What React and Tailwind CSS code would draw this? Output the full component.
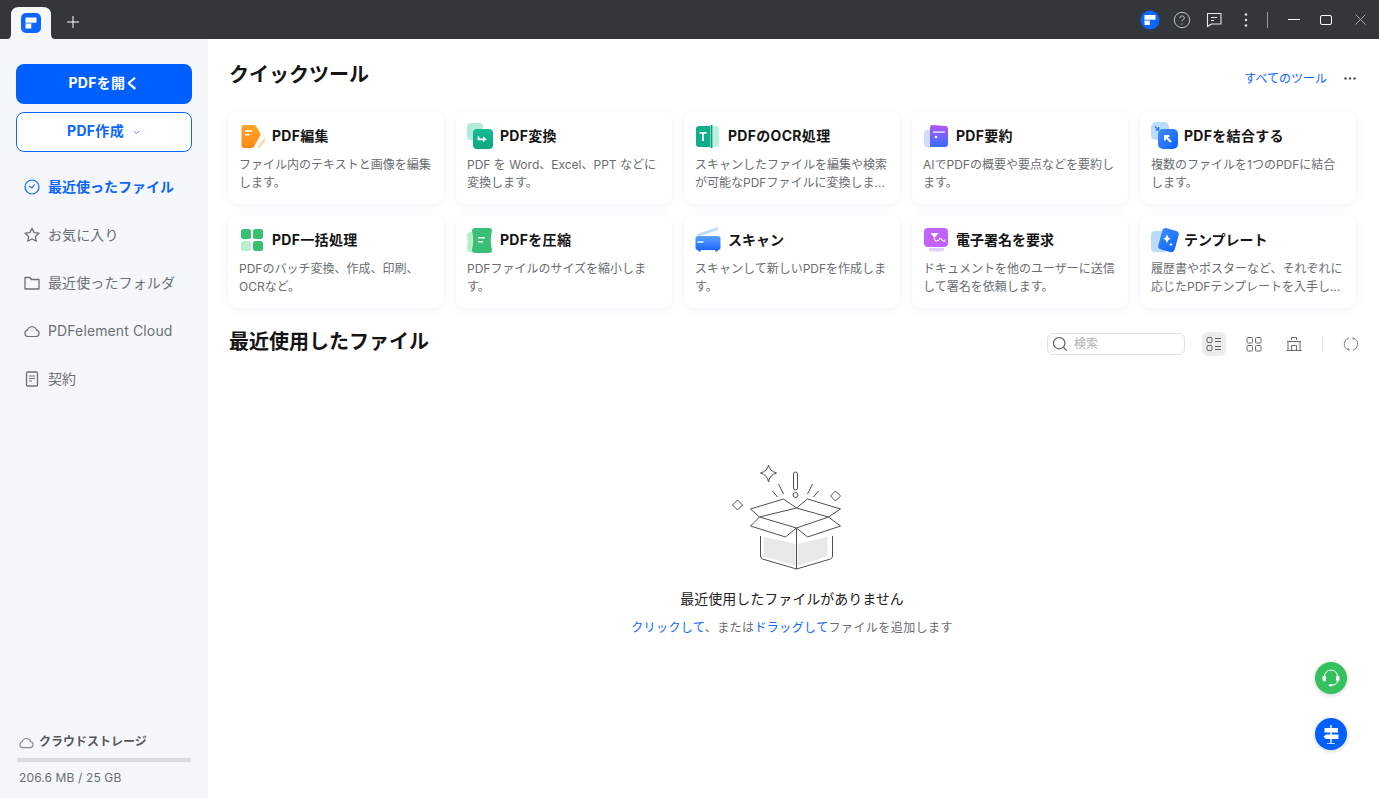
import React from "react";
import { ChevronDown } from "lucide-react";

/* Brand mark, shared by the tab and the title bar */
function Logo({ className }) {
  return (
    <svg viewBox="0 0 20 20" className={className}>
      <rect width="20" height="20" rx="5" fill="#0a66ff" />
      <path d="M4.500 4.500h11v5.200H10.300v5.800H4.500z" fill="#fff" />
      <path d="M4.500 9.700h5.800v.8H4.500z" fill="#0a66ff" />
    </svg>
  );
}

const EditIcon = () => (
  <svg viewBox="0 0 28 28" className="w-7 h-7">
    <defs>
      <linearGradient id="ed" x1="0" y1="0" x2="0" y2="1">
        <stop offset="0" stopColor="#ffa42c" />
        <stop offset="1" stopColor="#ff8a12" />
      </linearGradient>
    </defs>
    <path d="M25.500 15.500l1 .6-.4 3-5 6.400-2.400.6.300-2.700z" fill="#ffdcae" />
    <path d="M5 3h9.500q2 0 3 1.700l3.500 6q1 1.700 0 3.300l-6 10.500q-1 1.500-3 1.500H5q-2.500 0-2.500-2.500V5.500Q2.500 3 5 3z" fill="url(#ed)" />
    <path d="M6 8.300h7v1.400H6zM6 12h4.500v1.400H6z" fill="#fff" />
  </svg>
);

const ConvertIcon = () => (
  <svg viewBox="0 0 28 28" className="w-7 h-7">
    <defs>
      <linearGradient id="cv" x1="0" y1="0" x2="0" y2="1">
        <stop offset="0" stopColor="#16bb96" />
        <stop offset="1" stopColor="#0ea582" />
      </linearGradient>
    </defs>
    <rect x="0" y="1" width="16" height="17" rx="4" fill="#b1ecd8" />
    <rect x="6" y="7" width="20" height="20" rx="4" fill="url(#cv)" />
    <path d="M11.500 14.500v2.800h5" fill="none" stroke="#fff" strokeWidth="1.800" />
    <path d="M16 14.300l3.500 3-3.500 3z" fill="#fff" />
  </svg>
);

const OcrIcon = () => (
  <svg viewBox="0 0 28 28" className="w-7 h-7">
    <path d="M18 4h3q3 0 3 3v15q0 3-3 3h-3z" fill="#bdf0de" />
    <path d="M4 4h11v21H4q-3 0-3-3V7q0-3 3-3z" fill="#10ad8a" />
    <rect x="15.500" y="3" width="2" height="23" fill="#0c9c7c" />
    <path d="M4.500 10h7v1.800H8.900V19H7.100v-7.200H4.500z" fill="#fff" />
  </svg>
);

const SummaryIcon = () => (
  <svg viewBox="0 0 28 28" className="w-7 h-7">
    <defs>
      <linearGradient id="sm" x1="0" y1="0" x2="0" y2="1">
        <stop offset="0" stopColor="#b454f6" />
        <stop offset="1" stopColor="#366eff" />
      </linearGradient>
    </defs>
    <rect x="1" y="8" width="12" height="17" rx="3" fill="#d2dbfa" />
    <path d="M7 6q0-3 3-3l12 1q3 .3 3 3v15q0 3-3 3H7z" fill="url(#sm)" />
    <path d="M10 9.500h12v1.200H10z" fill="#fff" />
    <circle cx="13" cy="15" r="1.300" fill="#fff" />
  </svg>
);

const MergeIcon = () => (
  <svg viewBox="0 0 28 28" className="w-7 h-7">
    <defs>
      <linearGradient id="mg" x1="0" y1="0" x2="1" y2="1">
        <stop offset="0" stopColor="#3c8dff" />
        <stop offset="1" stopColor="#0e62fa" />
      </linearGradient>
    </defs>
    <rect x="0" y="0" width="18" height="18" rx="5" fill="#bcdcfd" />
    <path d="M4 4.500l3.600 3.600M7.600 5v3.100H4.500" stroke="#2f7bf5" strokeWidth="1.400" fill="none" />
    <rect x="7" y="7" width="20" height="20" rx="5" fill="url(#mg)" />
    <path d="M20 20l-5.500-5.500M14 18.500V14h4.500" stroke="#fff" strokeWidth="2" fill="none" />
  </svg>
);

const BatchIcon = () => (
  <svg viewBox="0 0 28 28" className="w-7 h-7">
    <rect x="2" y="3" width="10" height="10" rx="2.500" fill="#37bf72" />
    <rect x="14" y="3" width="10" height="10" rx="2.500" fill="#37bf72" />
    <rect x="2" y="15" width="10" height="10" rx="2.500" fill="#b6f0cd" />
    <rect x="14" y="15" width="10" height="10" rx="2.500" fill="#37bf72" />
  </svg>
);

const CompressIcon = () => (
  <svg viewBox="0 0 28 28" className="w-7 h-7">
    <path d="M3 6h6v20H3q-3 0-3-3 1.500-7 0-14 0-3 3-3z" fill="#b6f0cd" />
    <path d="M8 2h14q3 0 3 3-2.500 9.500 0 19 0 3-3 3H8q-3 0-3-3 2.500-9.500 0-19 0-3 3-3z" fill="#3abf76" />
    <path d="M11 11h7v1.500h-7zM11 15h5v1.500h-5z" fill="#fff" />
  </svg>
);

const ScanIcon = () => (
  <svg viewBox="0 0 28 28" className="w-7 h-7">
    <defs>
      <linearGradient id="sc" x1="0" y1="0" x2="0" y2="1">
        <stop offset="0" stopColor="#5aa3ff" />
        <stop offset="1" stopColor="#1f68ff" />
      </linearGradient>
    </defs>
    <path d="M1 8.500L23 1v2.800L5 10z" fill="#bcdcfd" />
    <path d="M3 10h20q2.500 0 2.500 2.500V22q0 2-2.500 2H3q-2.500 0-2.500-2v-9.500Q.500 10 3 10z" fill="url(#sc)" />
    <path d="M3 24h3l-.5 1.500h-2zM20 24h3l-.5 1.500h-2z" fill="#1f68ff" />
    <path d="M2.500 15.300h6v1.400h-6z" fill="#fff" />
  </svg>
);

const SignIcon = () => (
  <svg viewBox="0 0 28 28" className="w-7 h-7">
    <rect x="1" y="2" width="24" height="19" rx="4" fill="#c062fb" />
    <path d="M6 22h15v1q0 2.500-2.500 2.500h-10Q6 25.500 6 23z" fill="#e7cdfb" />
    <path d="M7.500 7h8L11.500 12z" fill="#fff" />
    <path d="M11 11.500q.8 4 3 3.500t2.500-2 2.800 1.200 2.500-.7" fill="none" stroke="#fff" strokeWidth="1.100" />
  </svg>
);

const TemplateIcon = () => (
  <svg viewBox="0 0 28 28" className="w-7 h-7">
    <defs>
      <linearGradient id="tp" x1="0" y1="0" x2="1" y2="1">
        <stop offset="0" stopColor="#3f8dff" />
        <stop offset="1" stopColor="#0e62fa" />
      </linearGradient>
    </defs>
    <rect x="0" y="5" width="17" height="21" rx="4" fill="#bcdcfd" />
    <rect x="9" y="3" width="17" height="22" rx="4" transform="rotate(15 17 14)" fill="url(#tp)" />
    <path d="M16 8q.7 4 4 4.800-3.300.8-4 4.800-.7-4-4-4.800 3.300-.8 4-4.800z" fill="#fff" />
    <path d="M20 16.500q.3 1.700 1.800 2-1.500.3-1.800 2-.3-1.700-1.800-2 1.500-.3 1.800-2z" fill="#fff" />
  </svg>
);

const TOOLS = [
  { title: "PDF編集", desc: "ファイル内のテキストと画像を編集します。", Icon: EditIcon },
  { title: "PDF変換", desc: "PDF を Word、Excel、PPT などに変換します。", Icon: ConvertIcon },
  { title: "PDFのOCR処理", desc: "スキャンしたファイルを編集や検索が可能なPDFファイルに変換します。スキャン文書", Icon: OcrIcon },
  { title: "PDF要約", desc: "AIでPDFの概要や要点などを要約します。", Icon: SummaryIcon },
  { title: "PDFを結合する", desc: "複数のファイルを1つのPDFに結合します。", Icon: MergeIcon },
  { title: "PDF一括処理", desc: "PDFのバッチ変換、作成、印刷、OCRなど。", Icon: BatchIcon },
  { title: "PDFを圧縮", desc: "PDFファイルのサイズを縮小します。", Icon: CompressIcon },
  { title: "スキャン", desc: "スキャンして新しいPDFを作成します。", Icon: ScanIcon },
  { title: "電子署名を要求", desc: "ドキュメントを他のユーザーに送信して署名を依頼します。", Icon: SignIcon },
  { title: "テンプレート", desc: "履歴書やポスターなど、それぞれに応じたPDFテンプレートを入手しましょう。", Icon: TemplateIcon },
];

const ClockIcon = () => (
  <svg viewBox="0 0 16 16" className="w-4 h-4" fill="none" stroke="#0a66ff" strokeWidth="1.200">
    <circle cx="8" cy="8" r="7" />
    <path d="M5 7l3 2 2.500-3.500" />
  </svg>
);
const StarIcon = () => (
  <svg viewBox="0 0 16 16" className="w-4 h-4" fill="none" stroke="#6d7075" strokeWidth="1.300" strokeLinejoin="round">
    <path d="M8 1.200l2.100 4.400 4.800.6-3.500 3.300.9 4.800L8 12l-4.300 2.300.9-4.800L1.100 6.200l4.800-.6z" />
  </svg>
);
const FolderIcon = () => (
  <svg viewBox="0 0 16 16" className="w-4 h-4" fill="none" stroke="#6d7075" strokeWidth="1.300">
    <path d="M1 2.500h5l1.500 2H15v9.500H1z" strokeLinejoin="round" />
  </svg>
);
const CloudIcon = ({ className = "w-4 h-4", color = "#6d7075" }) => (
  <svg viewBox="0 0 16 16" className={className} fill="none" stroke={color} strokeWidth="1.200">
    <path d="M4 13.500a3.200 3.200 0 0 1-.6-6.300 4.800 4.800 0 0 1 9.200 0 3.200 3.200 0 0 1-.6 6.300z" strokeLinejoin="round" />
  </svg>
);
const ContractIcon = () => (
  <svg viewBox="0 0 16 16" className="w-4 h-4" fill="none" stroke="#6d7075" strokeWidth="1.300">
    <rect x="2.500" y="1" width="11" height="14" rx="1.200" />
    <path d="M5 5h6M5 7.500h6M5 10h3" strokeWidth="1" />
  </svg>
);

const NAV = [
  { label: "最近使ったファイル", Icon: ClockIcon, active: true },
  { label: "お気に入り", Icon: StarIcon },
  { label: "最近使ったフォルダ", Icon: FolderIcon },
  { label: "PDFelement Cloud", Icon: CloudIcon },
  { label: "契約", Icon: ContractIcon },
];

function TitleBar() {
  return (
    <div className="h-[39px] shrink-0 bg-[#33373b] flex items-stretch pl-[11px]">
      <div className="relative w-10 mt-[7px] flex items-center justify-center">
        {/* tab shape with the small flare at its foot */}
        <svg viewBox="0 0 48 32" className="absolute left-[-4px] top-0 w-12 h-8">
          <path d="M0 32q4 0 4-5V8q0-8 8-8h24q8 0 8 8v19q0 5 4 5z" fill="#f5f7fb" />
        </svg>
        <Logo className="relative w-5 h-5" />
      </div>
      <div className="w-11 flex items-center justify-center pt-[5px]">
        <svg viewBox="0 0 12 12" className="w-3 h-3" stroke="#fff" strokeWidth="1">
          <path d="M6 0v12M0 6h12" />
        </svg>
      </div>
      <div className="ml-auto flex items-center">
        <svg viewBox="0 0 20 20" className="w-5 h-5">
          <circle cx="10" cy="10" r="9.500" fill="#0a66ff" />
          <path d="M4.500 5h11v4.800H9.800V15H4.500z" fill="#fff" />
          <path d="M4.500 9.800h5.300v.8H4.500z" fill="#0a66ff" />
        </svg>
        <svg viewBox="0 0 18 18" className="w-[18px] h-[18px] ml-[13px]" fill="none" stroke="#c4c6c8" strokeWidth="1">
          <circle cx="9" cy="9" r="7.700" />
          <path d="M6.800 7.200c0-3 4.500-3 4.500-.2 0 1.800-2.300 1.700-2.300 3.500" />
          <path d="M9 12.300v1.300" />
        </svg>
        <svg viewBox="0 0 16 16" className="w-4 h-4 ml-[15px]" fill="none" stroke="#e8e8e8" strokeWidth="1.100">
          <path d="M1.500 1.500h13.500v10.500H5.500L1.500 14.500z" strokeLinejoin="round" />
          <path d="M5 5.500h6M5 8.500h3" />
        </svg>
        <svg viewBox="0 0 4 14" className="w-1 h-3.5 ml-[22px]" fill="#e8e8e8">
          <circle cx="2" cy="1.500" r="1.200" />
          <circle cx="2" cy="7" r="1.200" />
          <circle cx="2" cy="12.500" r="1.200" />
        </svg>
        <div className="w-px h-[16px] bg-[#9a9da0] ml-[19px]" />
        <div className="w-3 h-px bg-white ml-5" />
        <div className="w-3 h-2.5 border border-white rounded-[2px] ml-5" />
        <svg viewBox="0 0 11 11" className="w-[11px] h-[11px] ml-[23px] mr-[13px]" stroke="#a4a6a8" strokeWidth="1">
          <path d="M.5.500l10 10M10.500.500l-10 10" />
        </svg>
      </div>
    </div>
  );
}

function Sidebar() {
  return (
    <aside className="w-[208px] shrink-0 bg-[#f5f7fb] flex flex-col px-4 pt-[25px] pb-[11px]">
      <button className="h-10 pb-1 rounded-[8px] bg-[#0060ff] text-white text-[14px] font-bold tracking-[0.3px]">PDFを開く</button>
      <button className="h-10 mt-2 rounded-[8px] border border-[#0a66ff] bg-white text-[#0a66ff] text-[14px] font-bold tracking-[0.3px] flex items-center justify-center gap-[8px]">
        <span className="pb-1">PDF作成</span>
        <ChevronDown className="w-[9px] h-[9px]" strokeWidth={2} />
      </button>
      <nav className="mt-[11px] flex flex-col">
        {NAV.map(({ label, Icon, active }) => (
          <div key={label} className="h-12 flex items-center gap-2 pl-2">
            <Icon />
            <span className={active ? "pb-[2px] text-[14px] font-bold text-[#0a66ff]" : "pb-[2px] text-[14px] tracking-[0.12px] text-[#6d7075]"}>{label}</span>
          </div>
        ))}
      </nav>
      <div className="mt-auto">
        <div className="flex items-center gap-[5px] pl-[3px]">
          <CloudIcon className="w-[15px] h-[15px]" color="#85888c" />
          <span className="text-[12px] font-bold text-[#55585c]">クラウドストレージ</span>
        </div>
        <div className="h-1 mt-[7px] mx-px rounded-full bg-[#dcdcdc]" />
        <div className="mt-[7px] pl-[3px] text-[12px] leading-[18px] tracking-[0.12px] text-[#6a6d70]">206.6 MB / 25 GB</div>
      </div>
    </aside>
  );
}

function ToolCard({ title, desc, Icon }) {
  const titleClass = title.startsWith("PDF")
    ? "pb-[2px] text-[14px] font-bold tracking-[0.3px] text-[#141414]"
    : "pb-[2px] text-[14px] font-bold text-[#141414]";
  return (
    <div className="h-[92px] rounded-[10px] bg-white shadow-[0_2px_10px_rgba(70,100,170,0.08)] pl-[11px] pr-[9px] pt-[10px]">
      <div className="h-7 flex items-center gap-[5px]">
        <Icon />
        <span className={titleClass}>{title}</span>
      </div>
      <p className="mt-[6px] text-[12px] leading-[18px] text-[#6a6d70] line-clamp-2">{desc}</p>
    </div>
  );
}

function Toolbar() {
  return (
    <div className="flex items-center pt-[6px]">
      <div className="w-[138px] h-[22px] rounded-[6px] border border-[#e2e2e2] flex items-center pl-1 gap-[6px]">
        <svg viewBox="0 0 16 16" className="w-4 h-4" fill="none" stroke="#55585f" strokeWidth="1.100">
          <circle cx="7.200" cy="7.200" r="5.700" />
          <path d="M11.500 11.500l3.200 3.200" />
        </svg>
        <span className="text-[12px] text-[#b0b2b5]">検索</span>
      </div>
      <div className="w-6 h-6 ml-[17px] rounded-[6px] bg-[#ececec] flex items-center justify-center">
        <svg viewBox="0 0 16 16" className="w-4 h-4" fill="none" stroke="#55585f" strokeWidth="1">
          <rect x="1" y="1.500" width="5" height="5" rx="1" />
          <rect x="1" y="9.500" width="5" height="5" rx="1" />
          <path d="M9 2.500h6M9 5.500h6M9 10.500h6M9 13.500h6" />
        </svg>
      </div>
      <svg viewBox="0 0 16 16" className="w-4 h-4 ml-5" fill="none" stroke="#66686d" strokeWidth="1">
        <rect x="1" y="1.500" width="5.500" height="5.500" rx="1" />
        <rect x="9.500" y="1.500" width="5.500" height="5.500" rx="1" />
        <rect x="1" y="9.500" width="5.500" height="5.500" rx="1" />
        <rect x="9.500" y="9.500" width="5.500" height="5.500" rx="1" />
      </svg>
      <svg viewBox="0 0 16 16" className="w-4 h-4 ml-6" fill="none" stroke="#66686d" strokeWidth="1">
        <path d="M.500 14.500h15M2 14.500V5.500M14 14.500V5.500M5.500 4V1.500h5V4M1 5.500h14M5.500 9.500h5v5M5.500 9.500v5" />
      </svg>
      <div className="w-px h-4 ml-5 bg-[#e4e4e4]" />
      <svg viewBox="0 0 16 16" className="w-4 h-4 ml-5 mr-[-3px]" fill="none" stroke="#7d8085" strokeWidth="1">
        <path d="M6 1.700A6.500 6.500 0 0 0 5 13.800M10 14.300A6.500 6.500 0 0 0 11 2.200" />
        <path d="M5 13.800l.3-1.800M5 13.800l1.800.3M11 2.200l-.3 1.800M11 2.200L9.200 1.900" />
      </svg>
    </div>
  );
}

function EmptyBox() {
  return (
    <svg viewBox="4.500 0 135 125" className="w-[135px] h-[125px] mt-[99px]" fill="none" stroke="#4c4e52" strokeWidth="1" strokeLinejoin="round">
      <path d="M43 82l24 5 8 2v22l-32-10zM77 89l30-7v19l-30 10z" fill="#e8e8e8" stroke="none" />
      <path d="M48 10q1 6 8 8-7 2-8 9-1-7-8-9 7-2 8-8z" />
      <path d="M17 45l5 5-5 5-5-5zM115 36l5 5-5 5-5-5z" />
      <rect x="73" y="17" width="4" height="18" rx="2" />
      <circle cx="75" cy="40" r="2.500" />
      <path d="M52 36l5 6M58 29l5 10M92 29l-5 10M98 36l-5 6" />
      <path d="M76 53l32 9-32 11-37-11z" />
      <path d="M76 53L63 44 30 54l9 8M76 53l11-9 33 10-12 8" />
      <path d="M39 62l-9 9 35 11 11-9 11 9 33-11-12-9" />
      <path d="M40 81v20q0 2 2 3l34 10 34-10q2-1 2-3V81M76 73v41" />
    </svg>
  );
}

export default function App() {
  return (
    <div className="relative h-[798px] flex flex-col overflow-hidden bg-white font-['Inter','Noto_Sans_CJK_JP',sans-serif]">
      <TitleBar />
      <div className="flex-1 flex min-h-0">
        <Sidebar />
        <main className="flex-1 pl-5 pr-[23px] pt-5">
          <div className="h-[30px] flex items-center justify-between">
            <h1 className="pl-px pt-[2px] text-[20px] font-bold text-[#141414]">クイックツール</h1>
            <div className="flex items-center gap-[17px] pt-[9px]">
              <span className="text-[12px] text-[#0a66ff]">すべてのツール</span>
              <svg viewBox="0 0 12 3" className="w-3 h-[3px]" fill="#4c4e52">
                <circle cx="1.500" cy="1.500" r="1.200" />
                <circle cx="6" cy="1.500" r="1.200" />
                <circle cx="10.500" cy="1.500" r="1.200" />
              </svg>
            </div>
          </div>
          <div className="grid grid-cols-5 gap-3 mt-[23px]">
            {TOOLS.map((t) => (
              <ToolCard key={t.title} {...t} />
            ))}
          </div>
          <div className="h-[30px] mt-[18px] flex items-center justify-between">
            <h2 className="pl-px pt-[2px] text-[20px] font-bold text-[#141414]">最近使用したファイル</h2>
            <Toolbar />
          </div>
          <div className="flex flex-col items-center">
            <EmptyBox />
            <p className="mt-[9px] text-[14px] leading-[20px] text-[#222]">最近使用したファイルがありません</p>
            <p className="mt-[10px] text-[12px] leading-[18px] tracking-[0.42px] text-[#6a6d70]">
              <span className="text-[#0a66ff]">クリックして</span>、または<span className="text-[#0a66ff]">ドラッグして</span>ファイルを追加します
            </p>
          </div>
        </main>
      </div>
      {/* floating help + guide buttons */}
      <div className="absolute right-8 bottom-12 flex flex-col gap-6">
        <div className="w-8 h-8 rounded-full bg-[#35c15e] shadow-[0_1px_4px_rgba(0,0,0,0.2)] flex items-center justify-center">
          <svg viewBox="0 0 20 20" className="w-5 h-5" fill="#fff">
            <path d="M3.500 10V8.500a6.500 6.500 0 0 1 13 0V10" fill="none" stroke="#fff" strokeWidth="1" />
            <rect x="1.500" y="7.500" width="3.500" height="6" rx="1.700" />
            <rect x="15" y="7.500" width="3.500" height="6" rx="1.700" />
            <path d="M16.500 13q0 3.500-5 4" fill="none" stroke="#fff" strokeWidth="1" />
            <ellipse cx="9.800" cy="17.200" rx="2" ry="1.300" />
          </svg>
        </div>
        <div className="w-8 h-8 rounded-full bg-[#0060ff] shadow-[0_1px_4px_rgba(0,0,0,0.2)] flex items-center justify-center">
          <svg viewBox="0 0 20 20" className="w-5 h-5" fill="#fff">
            <path d="M9.300 1h1.400v18H9.300zM6 19h8v.8H6z" />
            <path d="M3.500 4h13.500v4.500H3.500zM5 10.500h12.500v4.500H5L2.500 12.800z" />
          </svg>
        </div>
      </div>
    </div>
  );
}
